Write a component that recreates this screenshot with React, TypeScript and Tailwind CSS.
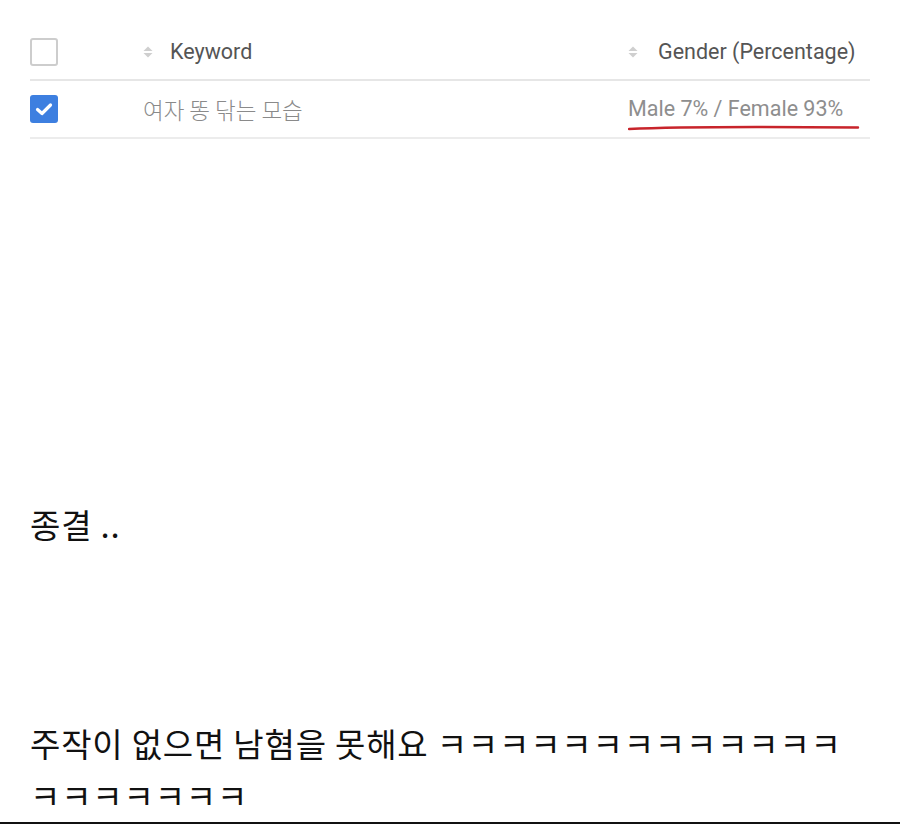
import React from 'react';

const sans = "font-['Roboto','Noto_Sans_CJK_KR',sans-serif]";
const kr = "font-['Noto_Sans_CJK_KR','Noto_Sans',sans-serif]";

function SortIcon() {
  return (
    <svg width="10" height="12" viewBox="0 0 10 12" className="shrink-0">
      <path d="M5 0.5 L9.5 5 L0.5 5 Z" fill="#cfcfcf" />
      <path d="M5 11.5 L9.5 7 L0.5 7 Z" fill="#cfcfcf" />
    </svg>
  );
}

function Checkbox({ checked }: { checked?: boolean }) {
  if (checked) {
    return (
      <div className="w-[28px] h-[28px] rounded-[3px] bg-[#3d7fe0] flex items-center justify-center">
        <svg width="18" height="14" viewBox="0 0 18 14">
          <path
            d="M2.5 7.5 L7 11.5 L15.5 3"
            fill="none"
            stroke="#ffffff"
            strokeWidth="3.2"
            strokeLinecap="round"
            strokeLinejoin="round"
          />
        </svg>
      </div>
    );
  }
  return <div className="w-[28px] h-[28px] rounded-[3px] border-2 border-[#cdcdcd] bg-white" />;
}

export default function App() {
  return (
    <main className="w-[900px] h-[824px] bg-white flex flex-col border-b-2 border-[#111]">
      <div className={`mx-[30px] mt-[24px] ${sans}`}>
        <div className="flex items-center h-[57px] border-b-2 border-[#e6e6e6]">
          <div className="w-[113px]">
            <Checkbox />
          </div>
          <div className="flex items-center gap-[17px] flex-1 text-[21.5px] leading-[28px] text-[#555]">
            <SortIcon />
            <span>Keyword</span>
          </div>
          <div className="w-[242px] flex items-center gap-[20px] text-[21.5px] leading-[28px] text-[#555]">
            <SortIcon />
            <span>Gender (Percentage)</span>
          </div>
        </div>
        <div className="flex items-center h-[58px] border-b-2 border-[#ececec]">
          <div className="w-[113px]">
            <Checkbox checked />
          </div>
          <div className={`flex-1 text-[22.5px] leading-[28px] font-light text-[#8a8a8a] ${kr}`}>
            여자 똥 닦는 모습
          </div>
          <div className="w-[242px] relative text-[21.5px] leading-[28px] text-[#8e8e8e]">
            <span>Male 7% / Female 93%</span>
            <svg
              width="234"
              height="8"
              viewBox="0 0 234 8"
              className="absolute left-0 top-[29px]"
            >
              <path
                d="M1 5 C 40 3, 120 2.5, 230 3.5"
                fill="none"
                stroke="#c8242b"
                strokeWidth="2.4"
                strokeLinecap="round"
              />
            </svg>
          </div>
        </div>
      </div>

      <p className={`ml-[30px] mt-[365px] text-[33px] leading-[40px] tracking-[0.8px] text-[#111] ${kr}`}>
        종결 ..
      </p>

      <p className={`ml-[30px] mt-[173px] text-[33px] leading-[52px] tracking-[0.8px] text-[#111] ${kr}`}>
        주작이 없으면 남혐을 못해요 ㅋㅋㅋㅋㅋㅋㅋㅋㅋㅋㅋㅋㅋ
        <br />
        ㅋㅋㅋㅋㅋㅋㅋ
      </p>
    </main>
  );
}
